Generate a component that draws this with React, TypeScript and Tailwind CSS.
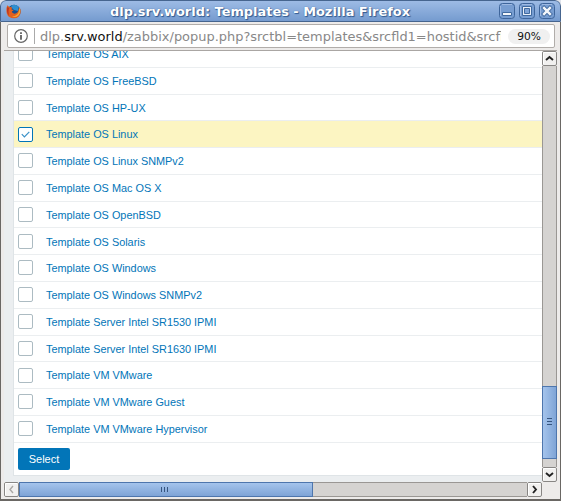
import React from 'react';

const rows = [
  'Template OS AIX', 'Template OS FreeBSD', 'Template OS HP-UX', 'Template OS Linux',
  'Template OS Linux SNMPv2', 'Template OS Mac OS X', 'Template OS OpenBSD', 'Template OS Solaris',
  'Template OS Windows', 'Template OS Windows SNMPv2', 'Template Server Intel SR1530 IPMI',
  'Template Server Intel SR1630 IPMI', 'Template VM VMware', 'Template VM VMware Guest',
  'Template VM VMware Hypervisor',
];

function FirefoxLogo() {
  return (
    <svg width="16" height="16" viewBox="0 0 16 16" className="mt-px shrink-0">
      <circle cx="8" cy="7.4" r="6.6" fill="#1b4f8c" />
      <path d="M6 1.2Q10 0 12.7 3L12 7L8 6L5 3Z" fill="#2f8fd0" />
      <path d="M1.3 1.2L3.6 3.2Q5.2 2.7 6.2 3.7L5.3 5.2L7.7 6.3L5.8 7.6Q6 9.6 8.6 9.7Q12 9.5 12.6 5.5L13.5 3.2Q15.4 6 14.3 10Q12.8 14.2 8 14.2Q2.2 14.2 .8 9.5Q-.2 5 1.3 1.2Z" fill="#e2601f" />
      <path d="M13.4 3.4Q15.4 8 12.6 11.2Q9.3 14.2 6 12.5Q10.8 12.4 12.8 8Z" fill="#f3a832" />
      <path d="M1.2 3Q.2 9 3.2 12Q1.8 7 3.3 4Z" fill="#be3422" />
    </svg>
  );
}

function WindowButton({ kind }: { kind: 'min' | 'max' | 'close' }) {
  return (
    <svg width="16" height="16" viewBox="0 0 16 16" className="shrink-0">
      <rect x=".5" y=".5" width="15" height="15" rx="3" fill="#779dd1" stroke="#3e659b" />
      <path d="M3 1.5H13M1.5 3V13" stroke="#a6c0e6" strokeOpacity=".8" />
      {kind === 'min' && <path d="M3.5 9.5H12.5V12.5H3.5Z" fill="#f3f6fa" stroke="#416a9f" />}
      {kind === 'max' && (
        <>
          <path d="M3.5 3.5H12.5V12.5H3.5Z" fill="#e9eff8" stroke="#416a9f" />
          <path d="M5.5 5.5H10.5V10.5H5.5Z" fill="#7fa3d6" stroke="#416a9f" />
        </>
      )}
      {kind === 'close' && (
        <>
          <path d="M3.6 3.6L12.4 12.4M12.4 3.6L3.6 12.4" stroke="#416a9f" strokeWidth="4.2" />
          <path d="M4.2 4.2L11.8 11.8M11.8 4.2L4.2 11.8" stroke="#f3f6fa" strokeWidth="2.5" />
        </>
      )}
    </svg>
  );
}

function Arrow({ d, muted = false }: { d: string; muted?: boolean }) {
  return (
    <svg width="15" height="15" viewBox="0 0 15 15" className="block shrink-0">
      <rect x=".5" y=".5" width="14" height="14" rx="1.5" fill="#f1f0ef" stroke="#888684" />
      <path d="M1.5 13.5V1.5H13.5" stroke="#fff" fill="none" />
      <path d={d} fill="none" stroke={muted ? '#aaa8a5' : '#222'} strokeWidth={muted ? 1.4 : 1.9} />
    </svg>
  );
}

function Checkbox({ checked }: { checked: boolean }) {
  return (
    <span className={`flex size-[15px] shrink-0 items-center justify-center rounded-[2px] border bg-white ${checked ? 'border-[#0275b8]' : 'border-[#acbbc2]'}`}>
      {checked && (
        <svg width="13" height="13" viewBox="0 0 13 13">
          <path d="M2.8 6.2L5.4 8.8L10.3 3.9" fill="none" stroke="#3a91c7" strokeWidth="1.2" />
        </svg>
      )}
    </span>
  );
}

export default function App() {
  return (
    <div className="bg-[#dfe3eb]">
      <div className="flex h-[501px] w-[561px] flex-col overflow-hidden rounded-t-[6px] bg-[#edebea]">
        <header className="flex h-[22px] shrink-0 items-center rounded-t-[6px] border-x border-t border-b border-[#46658f] bg-linear-to-b from-[#9dbbe5] to-[#759bcf] px-[5px]">
          <FirefoxLogo />
          <h1 className="flex-1 pt-[2px] pr-[1px] text-center font-['DejaVu_Sans',sans-serif] text-[12.92px] leading-5 font-bold whitespace-nowrap text-white [text-shadow:0_0_1px_#31598f,1px_1px_1px_#31598f]">
            dlp.srv.world: Templates - Mozilla Firefox
          </h1>
          <div className="flex gap-1">
            <WindowButton kind="min" />
            <WindowButton kind="max" />
            <WindowButton kind="close" />
          </div>
        </header>
        <div className="flex min-h-0 flex-1 flex-col border-x border-b-2 border-[#6a6764] px-[3px] pb-[2px]">
          <div className="h-[29px] shrink-0 border-b border-[#aaa6a3] pt-[2px] pr-[2px] pl-[3px]">
            <div className="flex h-6 items-center rounded-[2px] border border-[#b1adaa] bg-white pr-[3px] pl-[6px] font-['DejaVu_Sans',sans-serif]">
              <svg width="14" height="14" viewBox="0 0 14 14" className="shrink-0">
                <circle cx="7" cy="7" r="6.3" fill="none" stroke="#666" strokeWidth="1.2" />
                <path d="M7 6V10.7M7 3.2V5" stroke="#555" strokeWidth="1.7" />
              </svg>
              <span className="ml-[6px] h-4 w-px shrink-0 bg-[#aaa]" />
              <span className="ml-[5px] w-[461px] shrink-0 overflow-hidden pt-[2px] text-[12.96px] leading-5 whitespace-nowrap text-[#888]">
                dlp.<span className="text-[#111]">srv.world</span>/zabbix/popup.php?srctbl=templates&amp;srcfld1=hostid&amp;srcfl
              </span>
              <span className="ml-[7px] flex h-[15px] w-[42px] shrink-0 items-center justify-center rounded-full bg-[#f0f0f0] pt-px text-[10.67px] text-[#111]">90%</span>
            </div>
          </div>
          <div className="flex h-[431px] shrink-0">
            <main className="flex min-w-0 flex-1 flex-col bg-[#ebeef0] pl-[9px] font-['Liberation_Sans',sans-serif] text-[10.88px] text-[#0275b8]">
              <div className="flex h-[425px] shrink-0 flex-col overflow-hidden border-b border-l border-[#dfe4e7] bg-white">
                <div className="-mt-[10px] shrink-0">
                  {rows.map((name, i) => (
                    <div key={name} className={`flex h-[26.79px] items-start border-b border-[#ebeef0] pl-1 ${i === 3 ? 'bg-[#fcf5c2]' : ''}`}>
                      <div className="mt-[5.2px]"><Checkbox checked={i === 3} /></div>
                      <span className="mt-[6.1px] ml-[13px] leading-[14px] whitespace-nowrap">{name}</span>
                    </div>
                  ))}
                </div>
                <button className="mt-[5px] ml-1 h-[22px] w-[52px] shrink-0 rounded-[2px] bg-[#0275b8] pt-[2px] text-center text-[11px] text-white">Select</button>
              </div>
            </main>
            <div className="flex w-[15px] flex-col">
              <Arrow d="M4 9L7.5 6L11 9" />
              <div className="h-[320px] border-x border-[#9a9794] bg-[#d5d3d1]" />
              <div className="flex h-[73px] flex-col items-center justify-center gap-[2px] border border-[#4e76ad] bg-linear-to-r from-[#a5c4ec] to-[#7fa4d6] pb-[2px]">
                <i className="h-px w-[5px] bg-[#36557f]" />
                <i className="h-px w-[5px] bg-[#36557f]" />
                <i className="h-px w-[5px] bg-[#36557f]" />
              </div>
              <div className="flex-1 border-x border-[#9a9794] bg-[#d5d3d1]" />
              <Arrow d="M4 6L7.5 9L11 6" />
            </div>
          </div>
          <div className="flex h-[15px] w-[538px] shrink-0">
            <Arrow d="M9 4L6 7.5L9 11" muted />
            <div className="flex w-[294px] items-center justify-center gap-[2px] border border-[#4e76ad] bg-linear-to-b from-[#a5c4ec] to-[#7fa4d6] pr-[4px]">
              <i className="h-[5px] w-px bg-[#36557f]" />
              <i className="h-[5px] w-px bg-[#36557f]" />
              <i className="h-[5px] w-px bg-[#36557f]" />
            </div>
            <div className="flex-1 border-y border-[#9a9794] bg-[#d5d3d1]" />
            <Arrow d="M6 4L9 7.5L6 11" />
          </div>
        </div>
      </div>
    </div>
  );
}
